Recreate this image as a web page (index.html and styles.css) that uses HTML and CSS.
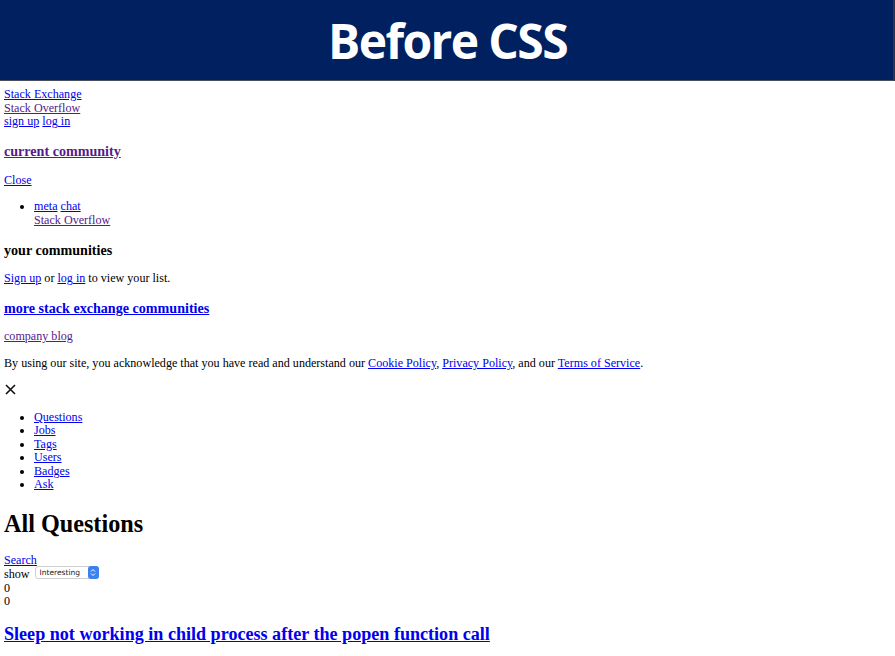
FILE: index.html
```html
<!DOCTYPE html>
<html>
<head>
<meta charset="utf-8">
<title>Before CSS</title>
<link rel="stylesheet" href="styles.css">
</head>
<body>
<header class="banner"><h1 class="banner-title">Before CSS</h1></header>
<div class="page">
  <div class="line"><a href="#">Stack Exchange</a></div>
  <div class="line"><a href="#" class="visited">Stack Overflow</a></div>
  <div class="line"><a href="#">sign up</a> <a href="#">log in</a></div>
  <h3><a href="#" class="visited">current community</a></h3>
  <p><a href="#">Close</a></p>
  <ul>
    <li><a href="#">meta</a> <a href="#">chat</a><br><a href="#" class="visited">Stack Overflow</a></li>
  </ul>
  <h3>your communities</h3>
  <p><a href="#">Sign up</a> or <a href="#">log in</a> to view your list.</p>
  <h3><a href="#">more stack exchange communities</a></h3>
  <p><a href="#" class="visited">company blog</a></p>
  <p>By using our site, you acknowledge that you have read and understand our <a href="#">Cookie Policy</a>, <a href="#">Privacy Policy</a>, and our <a href="#">Terms of Service</a>.</p>
  <div class="close-x"><svg width="11" height="11" viewBox="0 0 11 11"><path d="M1 1L10 10M10 1L1 10" stroke="#111" stroke-width="1.6" fill="none"/></svg></div>
  <ul class="nav">
    <li><a href="#">Questions</a></li>
    <li><a href="#">Jobs</a></li>
    <li><a href="#">Tags</a></li>
    <li><a href="#">Users</a></li>
    <li><a href="#">Badges</a></li>
    <li><a href="#">Ask</a></li>
  </ul>
  <h1>All Questions</h1>
  <div class="line"><a href="#">Search</a></div>
  <div class="line show-line">show <span class="select"><span class="select-text">Interesting</span><span class="select-btn"><svg width="6" height="9" viewBox="0 0 6 9"><path d="M1 3.5L3 1.5L5 3.5M1 5.5L3 7.5L5 5.5" stroke="#fff" stroke-width="1" fill="none"/></svg></span></span></div>
  <div class="line">0</div>
  <div class="line">0</div>
  <h2><a href="#">Sleep not working in child process after the popen function call</a></h2>
</div>
</body>
</html>
```
FILE: styles.css
```css
html, body {
  margin: 0;
  padding: 0;
  background: #fff;
}
.banner {
  height: 81px;
  background: #002060;
  border-right: 2px solid #2b3550;
  border-bottom: 1px solid #4a4f5c;
  display: flex;
  align-items: center;
  justify-content: center;
  box-sizing: border-box;
}
.banner-title {
  margin: 0;
  color: #fff;
  font-family: "Open Sans", sans-serif;
  font-weight: 700;
  font-size: 48px;
  letter-spacing: -1.6px;
  line-height: 1;
  padding-left: 2px;
  padding-top: 2px;
}
.page {
  font-family: "Liberation Serif", "Times New Roman", serif;
  font-size: 12.1px;
  line-height: 13.7px;
  color: #000;
  padding: 7px 4px 0 4px;
}
.page a {
  color: #0000ee;
}
.page a.visited {
  color: #551a8b;
}
.page p {
  margin: 12.5px 0;
}
.page h3 {
  font-size: 14.1px;
  line-height: 16.5px;
  margin: 14px 0;
}
.page h1 {
  font-size: 24.2px;
  line-height: 28px;
  margin: 18px 0 16px;
}
.page h2 {
  font-size: 18.1px;
  line-height: 21px;
  margin: 15.5px 0;
}
.page ul {
  margin: 13px 0;
  padding-left: 30px;
}
.page ul.nav {
  margin-top: 14px;
  line-height: 13.5px;
}
.close-x {
  height: 15px;
  margin-top: -1px;
  padding-left: 1px;
  display: flex;
  align-items: center;
}
.show-line {
  height: 14px;
}
.select {
  display: inline-flex;
  align-items: center;
  vertical-align: middle;
  height: 13px;
  margin-top: -3px;
  width: 64px;
  border: 1px solid #d0d0d0;
  border-radius: 3px;
  box-sizing: border-box;
  margin-left: 2px;
  position: relative;
  top: -1px;
  background: #fff;
}
.select-text {
  flex: 1;
  font-family: "DejaVu Sans", sans-serif;
  font-size: 7.5px;
  color: #222;
  padding-left: 4px;
  line-height: 1;
}
.select-btn {
  width: 11px;
  height: 13px;
  margin: -1px -1px -1px 0;
  background: #3b82f0;
  border-radius: 3px;
  display: flex;
  align-items: center;
  justify-content: center;
}
```
